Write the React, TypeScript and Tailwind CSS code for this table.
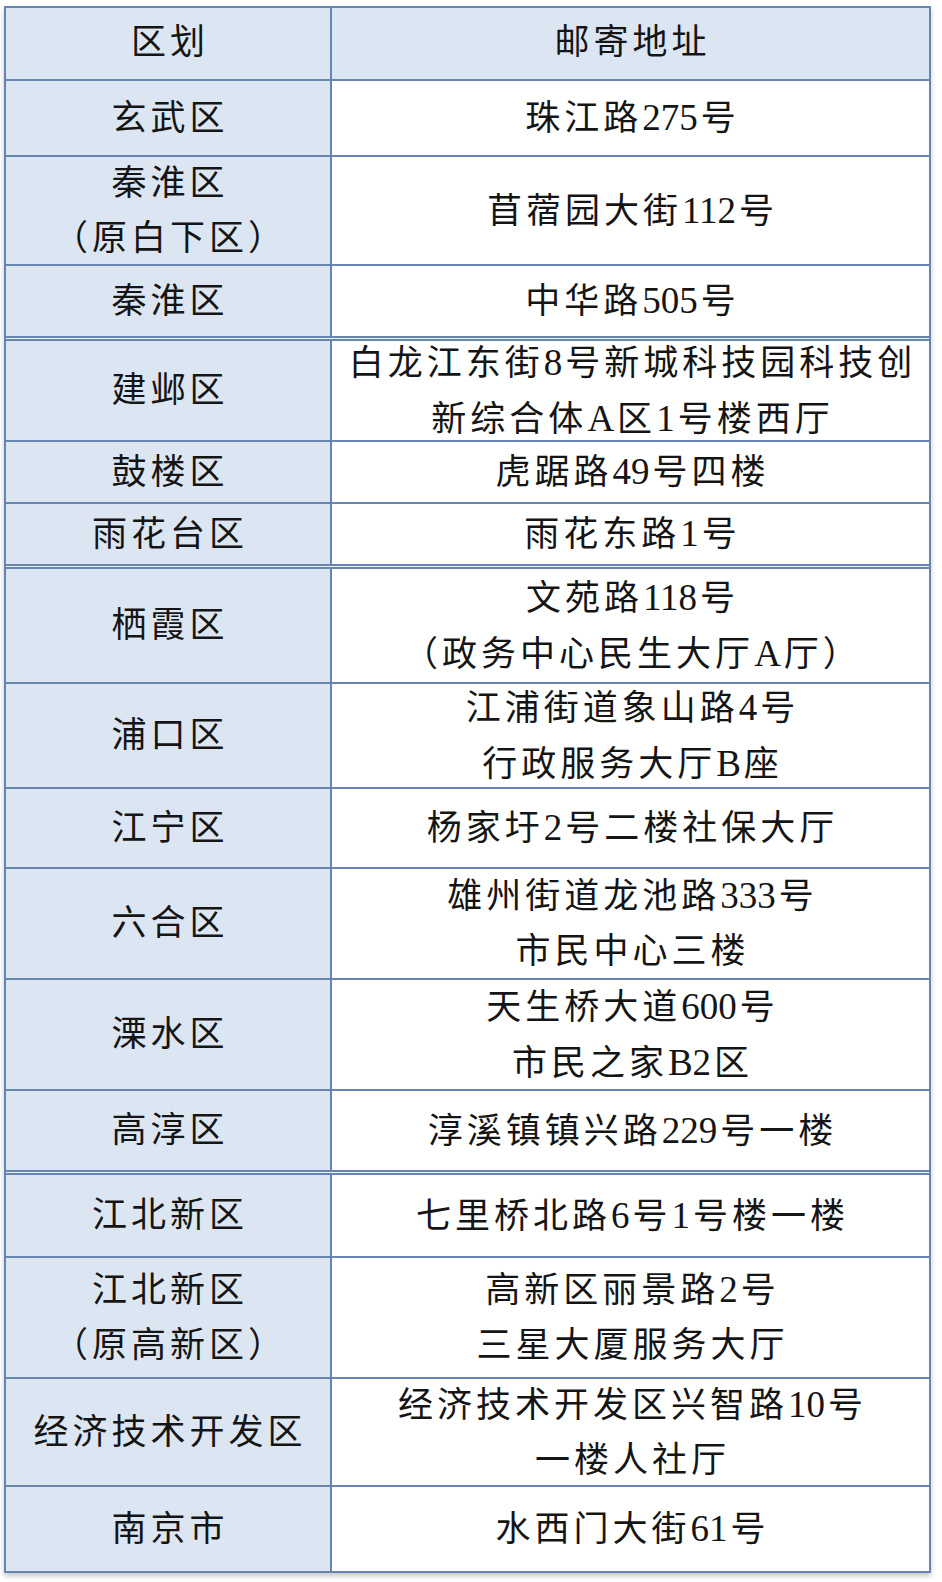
const rows = [
  { area: ["玄武区"], addr: ["珠江路275号"], h: "h-[76px]" },
  { area: ["秦淮区", "（原白下区）"], addr: ["苜蓿园大街112号"], h: "h-[109px]" },
  { area: ["秦淮区"], addr: ["中华路505号"], h: "h-[72px]" },
  { area: ["建邺区"], addr: ["白龙江东街8号新城科技园科技创", "新综合体A区1号楼西厅"], h: "h-[103px]", seam: true },
  { area: ["鼓楼区"], addr: ["虎踞路49号四楼"], h: "h-[62px]" },
  { area: ["雨花台区"], addr: ["雨花东路1号"], h: "h-[62px]" },
  { area: ["栖霞区"], addr: ["文苑路118号", "（政务中心民生大厅A厅）"], h: "h-[117px]", seam: true },
  { area: ["浦口区"], addr: ["江浦街道象山路4号", "行政服务大厅B座"], h: "h-[105px]" },
  { area: ["江宁区"], addr: ["杨家圩2号二楼社保大厅"], h: "h-[80px]" },
  { area: ["六合区"], addr: ["雄州街道龙池路333号", "市民中心三楼"], h: "h-[111px]" },
  { area: ["溧水区"], addr: ["天生桥大道600号", "市民之家B2区"], h: "h-[111px]" },
  { area: ["高淳区"], addr: ["淳溪镇镇兴路229号一楼"], h: "h-[81px]" },
  { area: ["江北新区"], addr: ["七里桥北路6号1号楼一楼"], h: "h-[85px]", seam: true },
  { area: ["江北新区", "（原高新区）"], addr: ["高新区丽景路2号", "三星大厦服务大厅"], h: "h-[121px]" },
  { area: ["经济技术开发区"], addr: ["经济技术开发区兴智路10号", "一楼人社厅"], h: "h-[108px]" },
  { area: ["南京市"], addr: ["水西门大街61号"], h: "h-[86px]" },
];

// digits and latin letters are set tighter, like the condensed serif in the scan
function Text({ s }: { s: string }) {
  const parts = s.split(/([0-9A-Z]+)/);
  return (
    <>
      {parts.map((p, i) =>
        /^[0-9A-Z]+$/.test(p) ? (
          <span key={i} className="text-[37px] tracking-[0px] pr-[3px]">{p}</span>
        ) : (
          <span key={i}>{p}</span>
        )
      )}
    </>
  );
}

function Lines({ lines }: { lines: string[] }) {
  return (
    <div className="flex flex-col items-center text-center leading-[55px] whitespace-nowrap">
      {lines.map((l, i) => (
        <span key={i} className="pl-[4px]">
          <Text s={l} />
        </span>
      ))}
    </div>
  );
}

export default function App() {
  return (
    <div className="w-[942px] h-[1582px] bg-white pt-[6px] pl-[4px] font-['Liberation_Serif','Noto_Sans_CJK_SC',serif] text-[35px] tracking-[4px] text-[#151515]">
      <div className="w-[927px] border-x-2 border-t-2 border-[#6685b0] bg-white shadow-[0_3px_5px_rgba(0,0,0,0.22)]">
        <div className="flex h-[73px] border-b-2 border-[#6685b0] bg-[#dce6f2]">
          <div className="w-[326px] shrink-0 flex items-center justify-center border-r-2 border-[#6685b0]">
            <span className="pl-[4px]">区划</span>
          </div>
          <div className="flex-1 flex items-center justify-center">
            <span className="pl-[4px]">邮寄地址</span>
          </div>
        </div>

        {rows.map((r, i) => (
          <div key={i}>
            {r.seam && <div className="h-px bg-[#eef2f8]" />}
            <div className={`flex ${r.h} border-b-2 border-[#6685b0] ${r.seam ? "border-t-2" : ""}`}>
              <div className="w-[326px] shrink-0 flex items-center justify-center overflow-hidden border-r-2 border-[#6685b0] bg-[#dce6f2]">
                <Lines lines={r.area} />
              </div>
              <div className="flex-1 flex items-center justify-center overflow-hidden bg-white">
                <Lines lines={r.addr} />
              </div>
            </div>
          </div>
        ))}
      </div>
    </div>
  );
}
